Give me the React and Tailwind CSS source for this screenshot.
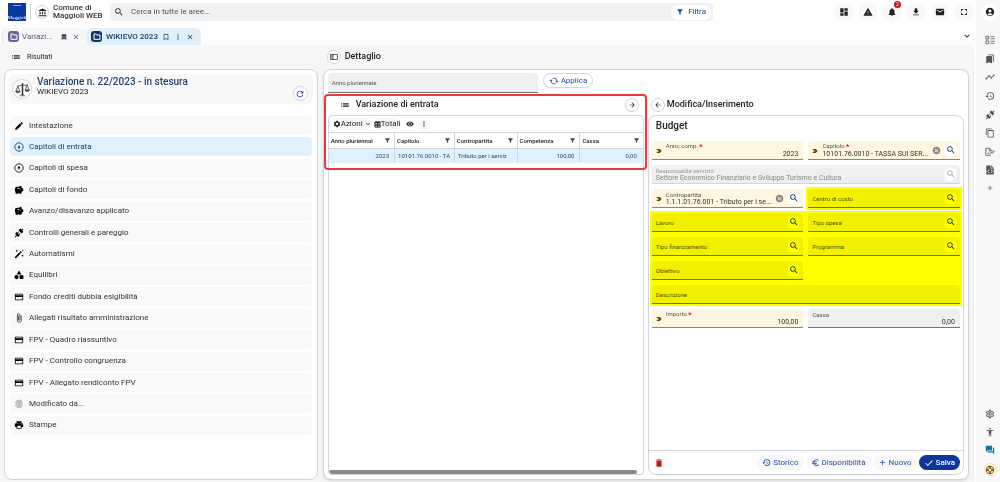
import { clsx } from 'clsx';
import {
    MdAccessibility, MdAccountBalance, MdAccountCircle, MdAdd, MdArrowBack, MdArrowForward, MdAttachFile, MdAutorenew,
    MdBookmark, MdBookmarkBorder, MdBookmarks, MdCancel, MdCheck, MdClose, MdContentCopy, MdCreditCard,
    MdDashboard, MdDelete, MdDownload, MdEdit, MdEuro, MdFilterAlt, MdFingerprint, MdForum, MdFullscreen, MdHistory,
    MdKeyboardArrowDown, MdList, MdMail, MdMoreVert, MdNotifications,
    MdOutlineSettings, MdPrint, MdRefresh, MdSavings, MdSearch, MdSettings, MdSupport, MdTimeline,
    MdVisibility, MdWarning,
} from 'react-icons/md';

function ConnectionIcon({ className }) {
    return (
        <svg viewBox="0 0 24 24" fill="currentColor" className={className}>
            <path d="M21.4 7.5C22.2 8.3 22.2 9.6 21.4 10.3L18.6 13.1L10.8 5.3L13.6 2.5C14.4 1.7 15.7 1.7 16.4 2.5L18.2 4.3L21.2 1.3L22.6 2.7L19.6 5.7L21.4 7.5M15.6 13.3L14.2 11.9L11.4 14.7L9.3 12.6L12.1 9.8L10.7 8.4L7.9 11.2L6.4 9.8L3.6 12.6C2.8 13.4 2.8 14.7 3.6 15.4L5.4 17.2L1.4 21.2L2.8 22.6L6.8 18.6L8.6 20.4C9.4 21.2 10.7 21.2 11.4 20.4L14.2 17.6L12.8 16.2L15.6 13.3Z" />
        </svg>
    );
}

function CircleArrowIcon({ className, up }) {
    return (
        <svg viewBox="0 0 24 24" fill="none" stroke="currentColor" strokeWidth="2" className={className}>
            <circle cx="12" cy="12" r="10" />
            <path d="M12 8v8" />
            <path d={up ? 'M8 12.500L12 8l4 4.500z' : 'M8 11.500L12 16l4-4.500z'} fill="currentColor" stroke="none" />
        </svg>
    );
}

function SignedFileIcon({ className }) {
    return (
        <svg viewBox="0 0 24 24" fill="none" stroke="currentColor" strokeWidth="2" className={className}>
            <path d="M14 20H2V3h9l5 5v3M10 4v5h5M6 16l3-2 2 2 8-5M17 16l5-5M20 8l3 3" />
        </svg>
    );
}

function CodeFileIcon({ className }) {
    return (
        <svg viewBox="0 0 24 24" fill="currentColor" className={className}>
            <path d="M5 1h10l6 6v16H3V3a2 2 0 0 1 2-2z" />
            <path d="M14 3v5h5" fill="none" stroke="#f8f8f8" strokeWidth="1.500" />
            <path d="M10 11l-4 4 4 4M14 11l4 4-4 4" fill="none" stroke="#f8f8f8" strokeWidth="2" />
        </svg>
    );
}

function ChecklistIcon({ className }) {
    return (
        <svg viewBox="0 0 24 24" fill="none" stroke="currentColor" strokeWidth="1.800" className={className}>
            <path d="M2 3h7v7H2zM2 14h7v7H2zM13 4h10M13 9h10M13 15h10M13 20h10" />
            <path d="M4 6.500l1.500 1.500L8 5" strokeWidth="1.200" />
        </svg>
    );
}

function ScalesIcon({ className }) {
    return (
        <svg viewBox="0 0 24 24" fill="none" stroke="currentColor" strokeWidth="1.2" className={className}>
            <path d="M4 6c3 1 5-1 8-1s5 1 8-1M8 22h8M9.5 20h5" />
            <path d="M12 2v18" strokeWidth="2.4" />
            <path d="M4.500 6.500L1.500 15h6zM19.500 4.500l-3 8.500h6z" />
            <path d="M1 15c.5 3 6.500 3 7 0zM16 13c.5 3 6.500 3 7 0z" fill="currentColor" fillOpacity=".3" />
        </svg>
    );
}

function WandIcon({ className }) {
    return (
        <svg viewBox="0 0 24 24" fill="currentColor" className={className}>
            <path d="M1.500 19.500L13 8l3 3L4.500 22.500zM14 7l2-2 3 3-2 2z" />
            <path d="M7 1l1 2.500L10.500 4.500 8 5.500 7 8 6 5.500 3.500 4.500 6 3.500zM20.500 13l1 2 2 1-2 1-1 2-1-2-2-1 2-1zM21 1l.8 1.700L23.500 3.500l-1.700.8L21 6l-.8-1.700L18.500 3.500l1.700-.8z" />
        </svg>
    );
}

function BalanceIcon({ className }) {
    return (
        <svg viewBox="0 0 24 24" fill="currentColor" className={className}>
            <path d="M12 1l5.500 9.500h-11z" />
            <circle cx="6" cy="17" r="5" />
            <path d="M13.500 12.500h9v9h-9z" />
        </svg>
    );
}

function GridIcon({ className }) {
    return (
        <svg viewBox="0 0 24 24" fill="none" stroke="currentColor" strokeWidth="3" className={className}>
            <path d="M3 3h18v18H3zM3 11h18M3 16h18M12 3v18" />
            <path d="M3 5h18" strokeWidth="4" />
        </svg>
    );
}

function TagIcon({ className }) {
    return (
        <svg viewBox="0 0 24 24" fill="currentColor" className={className}>
            <path d="M2 4h13l8 8-8 8H2l3-5h4V9H5z" />
        </svg>
    );
}

const EntrataIcon = (props) => <CircleArrowIcon {...props} />;
const SpesaIcon = (props) => <CircleArrowIcon up {...props} />;

const menu = [
    { label: 'Intestazione', icon: MdEdit },
    { label: 'Capitoli di entrata', icon: EntrataIcon, active: true },
    { label: 'Capitoli di spesa', icon: SpesaIcon },
    { label: 'Capitoli di fondo', icon: MdSavings },
    { label: 'Avanzo/disavanzo applicato', icon: MdSavings },
    { label: 'Controlli generali e pareggio', icon: ConnectionIcon },
    { label: 'Automatismi', icon: WandIcon },
    { label: 'Equilibri', icon: BalanceIcon },
    { label: 'Fondo crediti dubbia esigibilità', icon: MdCreditCard },
    { label: 'Allegati risultato amministrazione', icon: MdAttachFile },
    { label: 'FPV - Quadro riassuntivo', icon: MdCreditCard },
    { label: 'FPV - Controllo congruenza', icon: MdCreditCard },
    { label: 'FPV - Allegato rendiconto FPV', icon: MdCreditCard },
    { label: 'Modificato da...', icon: MdFingerprint, muted: true },
    { label: 'Stampe', icon: MdPrint },
];

const topIcons = [MdDashboard, MdWarning, MdNotifications, MdDownload, MdMail, MdFullscreen];

const sideIcons = [
    ChecklistIcon, MdBookmarks, MdTimeline, MdHistory, ConnectionIcon, MdContentCopy, SignedFileIcon, CodeFileIcon,
];

const columns = [
    { label: 'Anno pluriennal', value: '2023', width: 'w-[21%]', right: true },
    { label: 'Capitolo', value: '10101.76.0010 - TA', width: 'w-[19%]' },
    { label: 'Contropartita', value: 'Tributo per i serviz', width: 'w-[20%]' },
    { label: 'Competenza', value: '100,00', width: 'w-[20%]', right: true },
    { label: 'Cassa', value: '0,00', width: 'w-[20%]', right: true },
];

function TopBar() {
    return (
        <header className="flex h-6 shrink-0 items-center bg-white pl-2 pr-[3px] shadow-sm">
            <div className="flex h-[18px] w-[18px] shrink-0 flex-col items-center justify-between bg-[#0a3a9c] pt-[2px] text-white">
                <span className="h-px w-2 bg-[#7f9bd0]" />
                <span className="font-['Liberation_Serif'] text-[5px] leading-[6px]">Maggioli</span>
            </div>
            <span className="mx-1 h-4 w-px bg-gray-300" />
            <button aria-label="Ente" className="flex h-[14px] w-[14px] items-center justify-center rounded-full border border-gray-300">
                <MdAccountBalance className="h-[9px] w-[9px]" />
            </button>
            <div className="ml-1 w-[57px] text-[8px] font-medium leading-[8px] text-[#333]">Comune di<br />Maggioli WEB</div>
            <div className="flex h-[18px] flex-1 items-center rounded bg-[#f0f1f2] pl-1 pr-[2px]">
                <MdSearch className="h-[10px] w-[10px]" />
                <input aria-label="Cerca" placeholder="Cerca in tutte le aree..." className="ml-[7px] min-w-0 flex-1 bg-transparent text-[8px] outline-none placeholder:text-[#555]" />
                <button className="flex h-[15px] items-center gap-1 rounded-full bg-white px-[5px] text-[8px] text-[#1b46a5]">
                    <MdFilterAlt className="h-2 w-2" /> Filtra
                </button>
            </div>
            <div className="ml-[122px] flex gap-[6px]">
                {topIcons.map((Icon, i) => (
                    <button key={i} aria-label={`Azione ${i + 1}`} className="relative flex h-[18px] w-[18px] items-center justify-center rounded-full bg-[#f8f8f8]">
                        <Icon className="h-[10px] w-[10px]" />
                        {Icon === MdNotifications && (
                            <span className="absolute right-0 -top-[2px] flex h-[7px] w-[7px] items-center justify-center rounded-full bg-[#c4161c] text-[5px] leading-none text-white">2</span>
                        )}
                    </button>
                ))}
            </div>
        </header>
    );
}

function TabIcon({ className }) {
    return (
        <span className={clsx('flex h-[11px] w-[11px] items-center justify-center rounded-[3px]', className)}>
            <svg viewBox="0 0 12 12" fill="none" stroke="#fff" strokeWidth="1.500" className="h-2 w-2">
                <path d="M1.500 9.500v-8h3l1 1.500h5v6.500z" />
            </svg>
        </span>
    );
}

function Tabs() {
    return (
        <div className="flex h-[21px] shrink-0 items-end bg-[#fdfdfd] pl-[2px] pr-1 text-[8px]">
            <div className="flex h-[17px] w-[84px] items-center rounded-t-md border-l border-gray-200 bg-[#f7f7f7] pl-[5px] pr-[6px] text-[#5a5a78]">
                <TabIcon className="bg-[#6a6699]" />
                <span className="ml-[3px] flex-1">Variazi...</span>
                <MdBookmark className="mr-1 h-2 w-2" />
                <button aria-label="Chiudi Variazione"><MdClose className="h-2 w-2" /></button>
            </div>
            <div className="flex h-[17px] w-[115px] items-center rounded-t-md bg-[#e0f0fd] pl-[5px] pr-[7px] text-[#16385f]">
                <TabIcon className="bg-[#123763]" />
                <span className="ml-1 flex-1 font-medium">WIKIEVO 2023</span>
                <MdBookmarkBorder className="mr-1 h-2 w-2" />
                <MdMoreVert className="mr-1 h-2 w-2" />
                <button aria-label="Chiudi WIKIEVO 2023"><MdClose className="h-2 w-2" /></button>
            </div>
            <MdKeyboardArrowDown className="mb-1 ml-auto h-[10px] w-[10px]" />
        </div>
    );
}

function MenuPanel() {
    return (
        <section className="flex w-[32.5%] flex-col">
            <div className="flex h-6 items-center gap-[6px] pl-[7px] text-[7px]">
                <MdList className="h-[10px] w-[10px]" /> Risultati
            </div>
            <div className="flex flex-1 flex-col rounded-lg border border-gray-300 bg-white p-1 pb-11">
                <div className="mb-3 flex h-[30px] shrink-0 rounded-md bg-[#f8f8f8] pl-[3px] pr-[5px]">
                    <span className="mt-[5px] flex h-5 w-5 items-center justify-center rounded-full border border-gray-300 bg-white">
                        <ScalesIcon className="h-[15px] w-[15px] text-[#333]" />
                    </span>
                    <div className="ml-[5px] mt-[2px] flex-1">
                        <h1 className="text-[10px] font-medium leading-[11px] text-[#23466e]">Variazione n. 22/2023 - in stesura</h1>
                        <p className="text-[8px] leading-[9px]">WIKIEVO 2023</p>
                    </div>
                    <button aria-label="Aggiorna" className="mt-3 flex h-[15px] w-[15px] items-center justify-center rounded-full border border-gray-300 bg-white text-[#1b46a5]">
                        <MdRefresh className="h-[10px] w-[10px]" />
                    </button>
                </div>
                <nav className="flex flex-1 flex-col justify-between px-px">
                    {menu.map(({ label, icon: Icon, active, muted }) => (
                        <a
                            key={label}
                            href="#"
                            className={clsx('flex h-[19px] items-center gap-[5px] rounded pl-1 text-[8px]', active ? 'bg-[#e0f0fd] text-[#16385f]' : 'bg-[#f9f9f9] text-[#333]')}
                        >
                            <Icon className={clsx('h-[10px] w-[10px]', muted ? 'text-[#777]' : !active && 'text-black')} />
                            {label}
                        </a>
                    ))}
                </nav>
            </div>
        </section>
    );
}

function EntryTable() {
    return (
        <section className="relative flex min-w-0 flex-1 flex-col">
            <div className="flex h-5 shrink-0 items-center pl-3 pr-[5px]">
                <MdList className="h-[10px] w-[10px]" />
                <h2 className="ml-[6px] flex-1 text-[9px] font-medium">Variazione di entrata</h2>
                <button aria-label="Espandi" className="flex h-[14px] w-[14px] items-center justify-center rounded-full border border-gray-300">
                    <MdArrowForward className="h-2 w-2" />
                </button>
            </div>
            <div className="flex flex-1 flex-col overflow-hidden rounded border border-gray-300">
                <div className="flex h-4 shrink-0 items-center gap-[2px] pl-1 text-[8px]">
                    <button className="flex h-3 items-center rounded-full bg-[#f6f6f6]">
                        <MdSettings className="h-2 w-2" />Azioni<MdKeyboardArrowDown className="ml-px h-2 w-2" />
                    </button>
                    <button className="flex items-center rounded-full bg-[#f6f6f6]"><GridIcon className="h-[7px] w-[7px]" />Totali</button>
                    <button aria-label="Visualizza" className="mx-[3px]"><MdVisibility className="h-2 w-2" /></button>
                    <button aria-label="Altro" className="flex h-[11px] w-[11px] items-center justify-center rounded-full bg-[#f6f6f6]"><MdMoreVert className="h-2 w-2" /></button>
                </div>
                <table className="w-full table-fixed border-collapse text-[6px]">
                    <thead>
                        <tr className="h-4 border-y border-gray-300">
                            {columns.map((c) => (
                                <th key={c.label} className={clsx('border-r border-gray-300 px-[2px] text-left font-medium last:border-r-0', c.width)}>
                                    <div className="flex items-center justify-between pr-px">
                                        {c.label}
                                        <MdFilterAlt className="h-[7px] w-[7px] text-[#444]" />
                                    </div>
                                </th>
                            ))}
                        </tr>
                    </thead>
                    <tbody>
                        <tr className="h-[14px] bg-[#e0f0fd] text-[#34495e]">
                            {columns.map((c) => (
                                <td key={c.label} className={clsx('overflow-hidden whitespace-nowrap border-r border-gray-300 pl-[3px] last:border-r-0 last:pr-[6px]', c.right ? 'pr-[5px] text-right' : 'pr-[2px]')}>
                                    {c.value}
                                </td>
                            ))}
                        </tr>
                    </tbody>
                </table>
                <div className="mr-[6px] mt-auto h-1 shrink-0 rounded-full bg-[#8b8b8b]" />
            </div>
            <div className="pointer-events-none absolute -left-1 -right-[3px] -top-px h-[76px] rounded-sm border-2 border-[#e83a3e]" />
        </section>
    );
}

function Field({ id, label, value = '', tone = 'plain', tag, required, right, clear, search, disabled, wide }) {
    return (
        <div
            className={clsx(
                'flex h-[19px] items-center rounded-t border-b pl-1 pr-[3px]',
                wide && 'col-span-2',
                tone === 'cream' ? 'border-[#8f8570] bg-[#fff6e1]' : disabled ? 'border-gray-300 bg-[#eeeff0]' : 'border-[#777] bg-[#f0f0f0]',
            )}
        >
            {tag && <TagIcon className="mr-1 mt-[2px] h-[6px] w-[6px] shrink-0 text-[#6b4e00]" />}
            <div className="flex min-w-0 flex-1 flex-col">
                <label htmlFor={id} className={clsx('flex text-[6px] leading-[7px]', disabled ? 'text-[#999]' : 'text-[#555]')}>
                    {label}{required && <span className="ml-px mt-px text-[8px] font-bold text-[#e02020]">*</span>}
                </label>
                {value ? (
                    <input id={id} defaultValue={value} disabled={disabled} className={clsx('h-2 w-full bg-transparent text-[7px] leading-[8px] outline-none', right && 'pr-[2px] text-right', disabled ? 'text-[#888]' : 'text-[#333]')} />
                ) : (
                    <input id={id} className="h-0 w-full bg-transparent outline-none" />
                )}
            </div>
            {clear && <button type="button" aria-label={`Svuota ${label}`} className="mr-[3px]"><MdCancel className="h-[9px] w-[9px] text-[#888]" /></button>}
            {search && (
                <button type="button" aria-label={`Cerca ${label}`} disabled={disabled} className={clsx('flex h-[13px] w-[13px] items-center justify-center rounded-full bg-white', disabled ? 'text-[#aaa]' : 'text-[#16385f]')}>
                    <MdSearch className="h-[10px] w-[10px]" />
                </button>
            )}
        </div>
    );
}

function Highlight() {
    return <div className="pointer-events-none absolute -inset-[2px] bg-[#ffff00] mix-blend-multiply" />;
}

function EditPanel() {
    const pill = 'flex h-[15px] items-center gap-[2px] rounded-full bg-[#f8f8f8] px-[5px] text-[8px] text-[#2a4fa8]';

    return (
        <section className="flex min-w-0 flex-1 flex-col">
            <div className="flex h-5 shrink-0 items-center gap-[2px] pl-[3px]">
                <button aria-label="Indietro" className="flex h-[14px] w-[14px] items-center justify-center rounded-full border border-gray-300">
                    <MdArrowBack className="h-2 w-2" />
                </button>
                <h2 className="text-[9px] font-medium">Modifica/Inserimento</h2>
            </div>
            <form className="flex flex-1 flex-col rounded-lg border border-gray-300" onSubmit={(e) => e.preventDefault()}>
                <div className="flex-1 px-[3px] pt-1">
                    <h3 className="mb-[9px] pl-1 text-[10px] font-medium leading-3">Budget</h3>
                    <div className="grid grid-cols-2 gap-x-[5px] gap-y-[5px]">
                        <Field id="anno" label="Anno comp." value="2023" tone="cream" tag required right />
                        <Field id="capitolo" label="Capitolo" value="10101.76.0010 - TASSA SUI SER..." tone="cream" tag required clear search />
                        <Field id="responsabile" label="Responsabile servizio" value="Settore Economico Finanziario e Sviluppo Turismo e Cultura" disabled search wide />
                        <Field id="contropartita" label="Contropartita" value="1.1.1.01.76.001 - Tributo per i se..." tone="cream" tag clear search />
                        <div className="relative">
                            <Field id="centro" label="Centro di costo" search />
                            <Highlight />
                        </div>
                        <div className="relative col-span-2 grid grid-cols-2 gap-x-[5px] gap-y-[5px]">
                            <Field id="lavoro" label="Lavoro" search />
                            <Field id="spesa" label="Tipo spesa" search />
                            <Field id="finanziamento" label="Tipo finanziamento" search />
                            <Field id="programma" label="Programma" search />
                            <Field id="obiettivo" label="Obiettivo" search />
                            <Field id="descrizione" label="Descrizione" wide />
                            <Highlight />
                        </div>
                        <Field id="importo" label="Importo" value="100,00" tone="cream" tag required right />
                        <Field id="cassa" label="Cassa" value="0,00" right />
                    </div>
                </div>
                <div className="flex h-6 items-center gap-[2px] border-t border-gray-300 pl-1 pr-[3px]">
                    <button type="button" aria-label="Elimina" className="mr-auto flex h-3 w-3 items-center justify-center rounded-full bg-[#f8f8f8] text-[#c4161c]">
                        <MdDelete className="h-[10px] w-[10px]" />
                    </button>
                    <button type="button" className={pill}><MdHistory className="h-[9px] w-[9px]" />Storico</button>
                    <button type="button" className={pill}><MdEuro className="h-[9px] w-[9px]" />Disponibilità</button>
                    <button type="button" className={pill}><MdAdd className="h-[9px] w-[9px]" />Nuovo</button>
                    <button type="submit" className="flex h-[15px] items-center gap-[2px] rounded-full bg-[#0a369d] px-[5px] text-[8px] font-medium text-white"><MdCheck className="h-[10px] w-[10px]" />Salva</button>
                </div>
            </form>
        </section>
    );
}

function DetailPanel() {
    return (
        <section className="flex min-w-0 flex-1 flex-col">
            <div className="flex h-6 items-center gap-1 pl-1">
                <button aria-label="Pannello" className="flex h-[14px] w-[14px] items-center justify-center rounded-full border border-gray-300 bg-white">
                    <svg viewBox="0 0 16 12" fill="none" stroke="#333" strokeWidth="1.500" className="h-[6px] w-2">
                        <path d="M1.500 1.500h4v9h-4z" fill="#8db4dc" stroke="none" />
                        <path d="M1 1h14v10H1zM6 1v10" />
                    </svg>
                </button>
                <h2 className="text-[9px] font-medium">Dettaglio</h2>
            </div>
            <div className="flex flex-1 flex-col rounded-lg border border-gray-300 bg-white px-1 pb-1 pt-[3px] shadow-sm">
                <div className="mb-[2px] flex shrink-0 gap-[5px]">
                    <label className="flex h-[20px] w-[33%] items-center rounded-t border-b border-[#777] bg-[#eeeff0] px-1 text-[6px] text-[#555]">
                        Anno pluriennale
                        <input className="min-w-0 flex-1 bg-transparent outline-none" />
                    </label>
                    <button className="flex h-[15px] items-center gap-[2px] rounded-full border border-gray-300 px-[5px] text-[8px] text-[#2a4fa8]">
                        <MdAutorenew className="h-[10px] w-[10px] rotate-90" />Applica
                    </button>
                </div>
                <div className="flex flex-1 gap-1">
                    <EntryTable />
                    <EditPanel />
                </div>
            </div>
        </section>
    );
}

function SideBar() {
    return (
        <aside className="flex w-6 shrink-0 flex-col items-center bg-[#f8f8f8] pb-[6px] pl-1 pt-[3px] text-[#555]">
            <button aria-label="Profilo" className="mb-[14px] flex h-[18px] w-[18px] items-center justify-center rounded-full bg-white text-[#222]">
                <MdAccountCircle className="h-[10px] w-[10px]" />
            </button>
            <div className="flex h-[157px] flex-col justify-between">
                {sideIcons.map((Icon, i) => (
                    <button key={i} aria-label={`Strumento ${i + 1}`}><Icon className="h-[10px] w-[10px]" /></button>
                ))}
                <button aria-label="Aggiungi" className="text-[#23466e]"><MdAdd className="mx-auto h-2 w-2" /></button>
            </div>
            <div className="mt-auto flex flex-col items-center gap-2">
                <button aria-label="Impostazioni"><MdOutlineSettings className="h-[10px] w-[10px]" /></button>
                <button aria-label="Accessibilità"><MdAccessibility className="h-[10px] w-[10px]" /></button>
                <button aria-label="Chat" className="text-[#1179a0]"><MdForum className="h-[10px] w-[10px]" /></button>
                <button aria-label="Supporto" className="flex h-[13px] w-[13px] items-center justify-center rounded-full border border-[#e8dfc0] bg-[#fff9e6] text-[#7a5a00]"><MdSupport className="h-[10px] w-[10px]" /></button>
            </div>
        </aside>
    );
}

export default function App() {
    return (
        <div className="flex min-h-screen bg-white font-[Roboto,sans-serif] text-[#222]">
            <div className="flex min-w-0 flex-1 flex-col">
                <TopBar />
                <Tabs />
                <main className="mr-[2px] flex flex-1 gap-[5px] rounded-tr-lg border-r border-[#e0f0fd] bg-[#f6f6f6] pb-[2px] pl-1 pr-1">
                    <MenuPanel />
                    <DetailPanel />
                </main>
            </div>
            <SideBar />
        </div>
    );
}
